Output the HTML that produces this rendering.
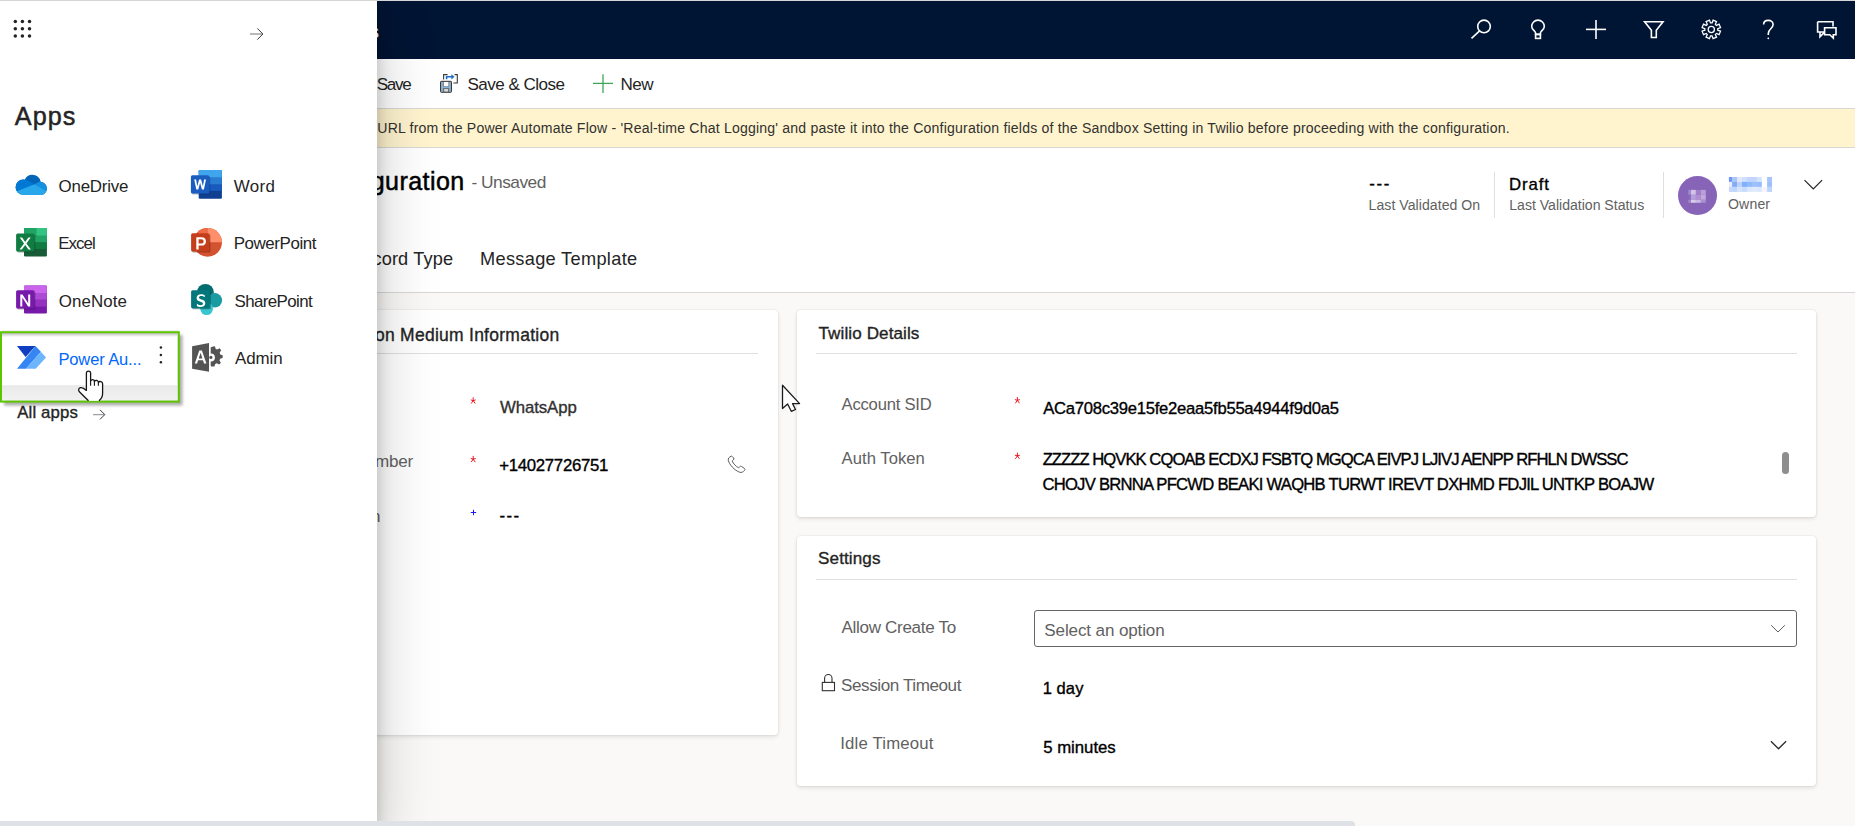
<!DOCTYPE html>
<html><head><meta charset="utf-8">
<style>
html,body{margin:0;padding:0;}
body{width:1855px;height:826px;overflow:hidden;position:relative;background:#faf9f8;font-family:"Liberation Sans",sans-serif;}
.t{position:absolute;white-space:nowrap;}
.abs{position:absolute;}
#main{position:absolute;left:0;top:0;width:1855px;height:826px;overflow:hidden;}
#nav{position:absolute;left:0;top:1px;width:1855px;height:58px;background:#001433;}
#cmd{position:absolute;left:0;top:59px;width:1855px;height:49px;background:#fff;border-bottom:1px solid #d8d8d8;}
#notif{position:absolute;left:0;top:109px;width:1855px;height:38px;background:#fff4ce;border-bottom:1px solid #d8d8d8;}
#hdr{position:absolute;left:0;top:148px;width:1855px;height:144px;background:#fff;border-bottom:1px solid #d8d8d8;}
.card{position:absolute;background:#fff;border-radius:4px;box-shadow:0 0 2px rgba(0,0,0,0.12),0 2px 4px rgba(0,0,0,0.10);}
.sep{position:absolute;height:1px;background:#e1dfdd;}
#panel{position:absolute;left:0;top:0;width:377px;height:826px;background:#fff;box-shadow:0 25.6px 57.6px 0 rgba(0,0,0,.22),0 4.8px 14.4px 0 rgba(0,0,0,.18);z-index:10;}
#topline{position:absolute;left:0;top:0;width:1855px;height:1px;background:#d6d6d6;z-index:20;}
#hscroll{position:absolute;left:0;top:821px;width:1355px;height:6px;background:#dee1e5;border-radius:0 4px 0 0;z-index:15;}
</style></head><body>
<div id="main">
  <div id="nav"></div>
  <div id="cmd"></div>
  <div id="notif"></div>
  <div id="hdr"></div>

  <!-- header dividers -->
  <div class="abs" style="left:1494px;top:172px;width:1px;height:46px;background:#e1dfdd;"></div>
  <div class="abs" style="left:1663px;top:172px;width:1px;height:46px;background:#e1dfdd;"></div>
  <!-- avatar -->
  <div class="abs" style="left:1678px;top:176px;width:39px;height:39px;border-radius:50%;background:#8764b8;"></div>

  <!-- cards -->
  <div class="card" style="left:300px;top:310px;width:478px;height:425px;"></div>
  <div class="sep" style="left:300px;top:353px;width:458px;"></div>
  <div class="card" style="left:797px;top:310px;width:1019px;height:207px;"></div>
  <div class="sep" style="left:816px;top:353px;width:981px;"></div>
  <div class="card" style="left:797px;top:536px;width:1019px;height:250px;"></div>
  <div class="sep" style="left:816px;top:579px;width:981px;"></div>
  <!-- select box -->
  <div class="abs" style="left:1034px;top:610px;width:761px;height:35px;border:1px solid #666;border-radius:3px;background:#fff;"></div>
  <!-- textarea scrollbar thumb -->
  <div class="abs" style="left:1782px;top:452px;width:7px;height:22px;border-radius:4px;background:#8e8e8e;"></div>

<div class="t" style="top:75.55px;font-size:17.07px;line-height:17.07px;color:#242424;letter-spacing:-1.258px;left:376.67px;">Save</div>
<div class="t" style="top:75.55px;font-size:17.07px;line-height:17.07px;color:#242424;letter-spacing:-0.543px;left:467.47px;">Save &amp; Close</div>
<div class="t" style="top:76.35px;font-size:17.07px;line-height:17.07px;color:#242424;letter-spacing:-0.458px;left:620.47px;">New</div>
<div class="t" style="top:120.78px;font-size:14.08px;line-height:14.08px;color:#323130;letter-spacing:0.187px;left:377.32px;">URL from the Power Automate Flow - 'Real-time Chat Logging' and paste it into the Configuration fields of the Sandbox Setting in Twilio before proceeding with the configuration.</div>
<div class="t" style="top:168.61px;font-size:25.03px;line-height:25.03px;color:#000;-webkit-text-stroke:0.5px #000;letter-spacing:0.447px;left:370.72px;">guration</div>
<div class="t" style="top:174.11px;font-size:17.35px;line-height:17.35px;color:#616161;letter-spacing:-0.520px;left:471.46px;">- Unsaved</div>
<div class="t" style="top:197.98px;font-size:14.08px;line-height:14.08px;color:#616161;letter-spacing:0.044px;left:1368.60px;">Last Validated On</div>
<div class="t" style="top:176.69px;font-size:16.78px;line-height:16.78px;color:#000;-webkit-text-stroke:0.35px #000;letter-spacing:0.847px;left:1509.09px;">Draft</div>
<div class="t" style="top:197.98px;font-size:14.08px;line-height:14.08px;color:#616161;letter-spacing:-0.010px;left:1509.30px;">Last Validation Status</div>
<div class="t" style="top:196.98px;font-size:14.08px;line-height:14.08px;color:#616161;letter-spacing:0.140px;left:1728.04px;">Owner</div>
<div class="t" style="top:250.49px;font-size:18.20px;line-height:18.20px;color:#242424;letter-spacing:0.134px;left:372.43px;">cord Type</div>
<div class="t" style="top:250.49px;font-size:18.20px;line-height:18.20px;color:#242424;letter-spacing:0.325px;left:479.98px;">Message Template</div>
<div class="t" style="top:326.99px;font-size:17.49px;line-height:17.49px;color:#242424;-webkit-text-stroke:0.35px #242424;letter-spacing:0.271px;left:374.95px;">on Medium Information</div>
<div class="t" style="top:453.15px;font-size:17.07px;line-height:17.07px;color:#616161;letter-spacing:-0.211px;left:374.93px;">mber</div>
<div class="t" style="top:507.55px;font-size:17.07px;line-height:17.07px;color:#616161;left:370.93px;">n</div>
<div class="t" style="top:399.99px;font-size:16.78px;line-height:16.78px;color:#323130;-webkit-text-stroke:0.35px #323130;letter-spacing:-0.063px;left:499.90px;">WhatsApp</div>
<div class="t" style="top:458.09px;font-size:16.78px;line-height:16.78px;color:#000;-webkit-text-stroke:0.35px #000;letter-spacing:-0.291px;left:499.21px;">+14027726751</div>
<div class="t" style="top:324.55px;font-size:17.07px;line-height:17.07px;color:#242424;-webkit-text-stroke:0.35px #242424;letter-spacing:0.101px;left:818.53px;">Twilio Details</div>
<div class="t" style="top:396.91px;font-size:16.64px;line-height:16.64px;color:#616161;letter-spacing:-0.231px;left:841.60px;">Account SID</div>
<div class="t" style="top:400.91px;font-size:16.64px;line-height:16.64px;color:#000;-webkit-text-stroke:0.35px #000;letter-spacing:-0.256px;left:1043.20px;">ACa708c39e15fe2eaa5fb55a4944f9d0a5</div>
<div class="t" style="top:450.51px;font-size:16.64px;line-height:16.64px;color:#616161;letter-spacing:0.042px;left:841.60px;">Auth Token</div>
<div class="t" style="top:451.51px;font-size:16.64px;line-height:16.64px;color:#000;-webkit-text-stroke:0.35px #000;letter-spacing:-0.960px;left:1042.68px;">ZZZZZ HQVKK CQOAB ECDXJ FSBTQ MGQCA EIVPJ LJIVJ AENPP RFHLN DWSSC</div>
<div class="t" style="top:476.51px;font-size:16.64px;line-height:16.64px;color:#000;-webkit-text-stroke:0.35px #000;letter-spacing:-0.747px;left:1042.42px;">CHOJV BRNNA PFCWD BEAKI WAQHB TURWT IREVT DXHMD FDJIL UNTKP BOAJW</div>
<div class="t" style="top:550.25px;font-size:17.07px;line-height:17.07px;color:#242424;-webkit-text-stroke:0.35px #242424;letter-spacing:0.100px;left:818.07px;">Settings</div>
<div class="t" style="top:619.35px;font-size:17.07px;line-height:17.07px;color:#616161;letter-spacing:-0.323px;left:841.50px;">Allow Create To</div>
<div class="t" style="top:621.65px;font-size:17.07px;line-height:17.07px;color:#616161;letter-spacing:-0.134px;left:1044.37px;">Select an option</div>
<div class="t" style="top:676.55px;font-size:17.07px;line-height:17.07px;color:#616161;letter-spacing:-0.414px;left:841.07px;">Session Timeout</div>
<div class="t" style="top:679.63px;font-size:16.50px;line-height:16.50px;color:#000;-webkit-text-stroke:0.35px #000;letter-spacing:0.093px;left:1042.67px;">1 day</div>
<div class="t" style="top:735.59px;font-size:16.78px;line-height:16.78px;color:#616161;letter-spacing:0.167px;left:840.29px;">Idle Timeout</div>
<div class="t" style="top:739.79px;font-size:16.78px;line-height:16.78px;color:#000;-webkit-text-stroke:0.35px #000;letter-spacing:-0.014px;left:1043.18px;">5 minutes</div>
<div class="t" style="top:507.79px;font-size:16.78px;line-height:16.78px;color:#000;-webkit-text-stroke:0.35px #000;letter-spacing:1.382px;left:499.48px;">---</div>
<div class="t" style="top:175.79px;font-size:16.78px;line-height:16.78px;color:#000;-webkit-text-stroke:0.35px #000;letter-spacing:1.732px;left:1369.18px;">---</div>

<svg class="abs" style="left:0;top:0;z-index:2" width="1855" height="826" viewBox="0 0 1855 826">
  <!-- nav partial s -->
  <text x="370" y="37.5" font-family="Liberation Sans" font-size="18" fill="#fff">s</text>
  <!-- nav icons -->
  <g fill="none" stroke="#fff" stroke-width="1.6">
    <circle cx="1484" cy="26.4" r="6.3"/>
    <line x1="1471.5" y1="38.3" x2="1479.6" y2="30.8"/>
    <path d="M1535.6,34.4 L1535.6,33 C1535.6,31.2 1531.7,29.6 1531.7,26.4 A6.3,6.3 0 0 1 1544.3,26.4 C1544.3,29.6 1540.4,31.2 1540.4,33 L1540.4,34.4 Z"/>
    <rect x="1535.6" y="34.4" width="4.8" height="4"/>
    <line x1="1586" y1="29.4" x2="1606" y2="29.4"/>
    <line x1="1596" y1="19.9" x2="1596" y2="38.9"/>
    <path d="M1644.6,21.7 L1663,21.7 L1656.3,30.2 L1656.3,37.5 L1651.4,37.5 L1651.4,30.2 Z"/>
    <g stroke-width="1.25"><path d="M1712.09,22.95 L1713.09,20.17 L1716.56,21.61 L1715.30,24.28 L1716.42,25.40 L1719.09,24.14 L1720.53,27.61 L1717.75,28.61 L1717.75,30.19 L1720.53,31.19 L1719.09,34.66 L1716.42,33.40 L1715.30,34.52 L1716.56,37.19 L1713.09,38.63 L1712.09,35.85 L1710.51,35.85 L1709.51,38.63 L1706.04,37.19 L1707.30,34.52 L1706.18,33.40 L1703.51,34.66 L1702.07,31.19 L1704.85,30.19 L1704.85,28.61 L1702.07,27.61 L1703.51,24.14 L1706.18,25.40 L1707.30,24.28 L1706.04,21.61 L1709.51,20.17 L1710.51,22.95 Z"/>
    <circle cx="1711.3" cy="29.4" r="3.1"/></g>
    <path d="M1763.6,24.6 C1763.6,21.6 1765.8,20.4 1768.3,20.4 C1771.1,20.4 1773.1,22.2 1773.1,24.6 C1773.1,28.6 1768.3,29 1768.3,33.4 L1768.3,35"/>
    <path d="M1817.6,21.8 L1833,21.8 L1833,26.6 M1824.6,32 L1817.6,32 L1817.6,21.8 M1820,32 L1820,36.8 L1824,32.6"/>
    <path d="M1824.6,27.8 L1836,27.8 L1836,34.8 L1833.3,34.8 L1833.3,38.2 L1829.8,34.8 L1824.6,34.8 Z"/>
  </g>
  <circle cx="1768.3" cy="38.3" r="0.9" fill="#fff"/>

  <!-- Save & Close icon -->
  <g>
    <rect x="440.5" y="81.3" width="11" height="11" rx="0.8" fill="#707070" stroke="#3b3a39" stroke-width="1"/>
    <rect x="441.2" y="82" width="1.6" height="9.8" fill="#8ab8e0"/>
    <rect x="449.2" y="82" width="1.6" height="9.8" fill="#8ab8e0"/>
    <rect x="441.2" y="86.6" width="9.6" height="1.3" fill="#8ab8e0"/>
    <rect x="443.8" y="82" width="4.6" height="4.2" fill="#fff"/>
    <rect x="444.2" y="89" width="3.8" height="2.6" fill="#d8d8d8"/>
    <path d="M443.6,79.5 L443.6,74.6 L447.6,74.6 M454.6,74.6 L457.3,74.6 L457.3,83 L453.4,83" fill="none" stroke="#3b3a39" stroke-width="1.1"/>
    <path d="M446.6,79.2 L446.6,76.8 L452.2,76.8" fill="none" stroke="#1f6fc5" stroke-width="1.6"/>
    <path d="M451.4,74.2 L454.6,76.8 L451.4,79.4 Z" fill="#1f6fc5"/>
  </g>
  <!-- New plus -->
  <g stroke="#3ea55a" stroke-width="1.3">
    <line x1="593" y1="83.4" x2="613" y2="83.4"/>
    <line x1="603" y1="74.2" x2="603" y2="93"/>
  </g>

  <!-- header chevron -->
  <path d="M1804.5,180.2 L1813.3,189 L1822.1,180.2" fill="none" stroke="#242424" stroke-width="1.2"/>

  <!-- avatar initials pixelated -->
  <g>
    <rect x="1688.2" y="189.9" width="2.7" height="4.9" fill="#9b8ad0"/><rect x="1690.9" y="189.9" width="5" height="4.9" fill="#d5c3e6"/><rect x="1695.9" y="189.9" width="5" height="4.9" fill="#9e80cc"/><rect x="1700.9" y="189.9" width="4.9" height="4.9" fill="#bb9fd8"/>
    <rect x="1688.2" y="194.8" width="2.7" height="5" fill="#8a68bb"/><rect x="1690.9" y="194.8" width="5" height="5" fill="#b5a0dc"/><rect x="1695.9" y="194.8" width="5" height="5" fill="#b18ed0"/><rect x="1700.9" y="194.8" width="4.9" height="5" fill="#c2a8dc"/>
    <rect x="1688.2" y="199.8" width="2.7" height="3" fill="#9c86cc"/><rect x="1690.9" y="199.8" width="5" height="3" fill="#d8cce9"/><rect x="1695.9" y="199.8" width="5" height="3" fill="#c7b9e4"/><rect x="1700.9" y="199.8" width="4.9" height="3" fill="#ab8fd0"/>
  </g>
  <!-- pixelated name -->
  <g>
<rect x="1728.9" y="177" width="3.25" height="4.95" fill="#6f95f8"/>
<rect x="1732.1" y="177" width="5.05" height="4.95" fill="#a7c6fb"/>
<rect x="1737.1" y="177" width="4.95" height="4.95" fill="#e4e6fc"/>
<rect x="1742" y="177" width="5.05" height="4.95" fill="#cde0fd"/>
<rect x="1747" y="177" width="5.05" height="4.95" fill="#c4d4fd"/>
<rect x="1752" y="177" width="4.95" height="4.95" fill="#c5d3fd"/>
<rect x="1756.9" y="177" width="5.05" height="4.95" fill="#d4e4fd"/>
<rect x="1761.9" y="177" width="5.25" height="4.95" fill="#ffffff"/>
<rect x="1767.1" y="177" width="4.95" height="4.95" fill="#a7c4fa"/>
<rect x="1728.9" y="181.9" width="3.25" height="5.05" fill="#ececfd"/>
<rect x="1732.1" y="181.9" width="5.05" height="5.05" fill="#84aaf8"/>
<rect x="1737.1" y="181.9" width="4.95" height="5.05" fill="#bcd2fc"/>
<rect x="1742" y="181.9" width="5.05" height="5.05" fill="#83b0fa"/>
<rect x="1747" y="181.9" width="5.05" height="5.05" fill="#8ebcfb"/>
<rect x="1752" y="181.9" width="4.95" height="5.05" fill="#9dbffb"/>
<rect x="1756.9" y="181.9" width="5.05" height="5.05" fill="#9bbcfb"/>
<rect x="1761.9" y="181.9" width="5.25" height="5.05" fill="#ffffff"/>
<rect x="1767.1" y="181.9" width="4.95" height="5.05" fill="#a0c0fa"/>
<rect x="1728.9" y="186.9" width="3.25" height="5.05" fill="#ccd6fb"/>
<rect x="1732.1" y="186.9" width="5.05" height="5.05" fill="#bcd6fc"/>
<rect x="1737.1" y="186.9" width="4.95" height="5.05" fill="#d7e2fc"/>
<rect x="1742" y="186.9" width="5.05" height="5.05" fill="#c8dcfc"/>
<rect x="1747" y="186.9" width="5.05" height="5.05" fill="#dce9fd"/>
<rect x="1752" y="186.9" width="4.95" height="5.05" fill="#e2ebfd"/>
<rect x="1756.9" y="186.9" width="5.05" height="5.05" fill="#dce8fd"/>
<rect x="1761.9" y="186.9" width="5.25" height="5.05" fill="#f7f4fe"/>
<rect x="1767.1" y="186.9" width="4.95" height="5.05" fill="#bad6fc"/>
  </g>

  <!-- asterisks / required markers -->
  <g fill="none" stroke="#e8101e" stroke-width="0.95" stroke-linecap="round">
<path d="M473.2,400.6 L473.2,397.70000000000005 M473.2,400.6 L471.09999999999997,400.0 M473.2,400.6 L475.3,400.0 M473.2,400.6 L471.4,403.20000000000005 M473.2,400.6 L475.0,403.20000000000005"/>
<path d="M473.2,459.2 L473.2,456.3 M473.2,459.2 L471.09999999999997,458.59999999999997 M473.2,459.2 L475.3,458.59999999999997 M473.2,459.2 L471.4,461.8 M473.2,459.2 L475.0,461.8"/>
<path d="M1017.4,400.3 L1017.4,397.40000000000003 M1017.4,400.3 L1015.3,399.7 M1017.4,400.3 L1019.5,399.7 M1017.4,400.3 L1015.6,402.90000000000003 M1017.4,400.3 L1019.1999999999999,402.90000000000003"/>
<path d="M1017.4,455.9 L1017.4,453.0 M1017.4,455.9 L1015.3,455.29999999999995 M1017.4,455.9 L1019.5,455.29999999999995 M1017.4,455.9 L1015.6,458.5 M1017.4,455.9 L1019.1999999999999,458.5"/>
  </g>
  <g stroke="#1c1cf0" stroke-width="1">
    <line x1="470.8" y1="512.5" x2="476.2" y2="512.5"/>
    <line x1="473.5" y1="509.8" x2="473.5" y2="515.2"/>
  </g>
  <!-- phone icon -->
  <path d="M731.2,456.2 C729.4,457 727.8,458.3 728.3,460.4 C729.3,464.6 734.5,470.3 739.5,472.2 C741.4,472.9 743.4,472 744.6,470.3 C745.1,469.6 745,468.8 744.3,468.3 L741.6,466.5 C740.9,466 740.1,466.1 739.6,466.7 L738.6,467.8 C735.8,466.4 733.4,463.8 732.2,461 L733.4,460 C734,459.5 734.1,458.7 733.7,458 L732.4,456.6 C732.1,456.2 731.7,456 731.2,456.2 Z" fill="none" stroke="#605e5c" stroke-width="1"/>

  <!-- select chevron -->
  <path d="M1771.2,625.3 L1778,632 L1784.8,625.3" fill="none" stroke="#605e5c" stroke-width="1"/>
  <!-- idle chevron -->
  <path d="M1770.9,741.2 L1778.5,748.7 L1786.1,741.2" fill="none" stroke="#323130" stroke-width="1.4"/>
  <!-- lock -->
  <g fill="none" stroke="#323130" stroke-width="1.1">
    <path d="M824.6,682.4 L824.6,678.2 A3.7,3.7 0 0 1 832,678.2 L832,682.4"/>
    <rect x="822.3" y="682.4" width="12.2" height="8.3"/>
  </g>
</svg>
<svg class="abs" style="left:0;top:0;z-index:30;pointer-events:none" width="1855" height="826" viewBox="0 0 1855 826">
  <path d="M782.5,385.3 L782.5,408.6 L787.6,404 L791.3,411.3 L795.5,409.5 L792.6,403.6 L799.6,403.6 Z" fill="#fff" stroke="#1b1b1b" stroke-width="1.3" stroke-linejoin="round"/>
</svg>

</div>

<div id="panel">

<svg class="abs" style="left:0;top:0" width="377" height="826" viewBox="0 0 377 826">
  <!-- waffle -->
  <g fill="#242424">
    <circle cx="15.3" cy="21.6" r="1.75"/><circle cx="22.4" cy="21.6" r="1.75"/><circle cx="29.5" cy="21.6" r="1.75"/>
    <circle cx="15.3" cy="28.8" r="1.75"/><circle cx="22.4" cy="28.8" r="1.75"/><circle cx="29.5" cy="28.8" r="1.75"/>
    <circle cx="15.3" cy="36" r="1.75"/><circle cx="22.4" cy="36" r="1.75"/><circle cx="29.5" cy="36" r="1.75"/>
  </g>
  <!-- top arrow -->
  <line x1="250" y1="34" x2="262" y2="34" stroke="#9ea2a8" stroke-width="1.5"/>
  <path d="M257.3,28.4 L262.9,34 L257.3,39.6" fill="none" stroke="#3b3a39" stroke-width="1"/>

  <!-- OneDrive -->
  <defs>
    <clipPath id="odclip">
      <circle cx="32.4" cy="183.3" r="8.5"/>
      <circle cx="23.2" cy="187.2" r="7.6"/>
      <circle cx="40.4" cy="188.5" r="6.5"/>
      <rect x="23" y="187" width="18" height="8"/>
    </clipPath>
  </defs>
  <g clip-path="url(#odclip)">
    <rect x="10" y="170" width="45" height="30" fill="#0364b8"/>
    <polygon points="5,168 22.5,177.5 34.5,184.3 5,200" fill="#0078d4"/>
    <polygon points="34.5,184.3 40.5,181 55,181 55,200" fill="#1490df"/>
    <polygon points="5,196 34.5,184.3 55,196.5 55,200 5,200" fill="#28a8ea"/>
  </g>

  <!-- Word -->
  <g>
    <rect x="198.7" y="170.1" width="23.2" height="28.6" rx="1.2" fill="#103f91"/>
    <path d="M198.7,171.3 a1.2,1.2 0 0 1 1.2,-1.2 h20.8 a1.2,1.2 0 0 1 1.2,1.2 v6.4 h-23.2 Z" fill="#41a5ee"/>
    <rect x="198.7" y="177.7" width="23.2" height="7" fill="#2b7cd3"/>
    <rect x="198.7" y="184.7" width="23.2" height="6.2" fill="#185abd"/>
    <rect x="191.9" y="176.2" width="18.4" height="18.4" rx="1.5" fill="#0b2e6b" opacity="0.35"/>
    <rect x="190.9" y="175.2" width="18.4" height="18.4" rx="1.5" fill="#1a5dbf"/>
    <path d="M194.2,179.4 L196.3,189.4 L198.3,189.4 L200.1,182.7 L201.9,189.4 L203.9,189.4 L206,179.4 L204.1,179.4 L202.9,186.2 L201.1,179.4 L199.1,179.4 L197.3,186.2 L196.1,179.4 Z" fill="#fff"/>
  </g>

  <!-- Excel -->
  <g>
    <rect x="24" y="228.1" width="22.9" height="28.4" rx="1.2" fill="#185c37"/>
    <path d="M24,229.3 a1.2,1.2 0 0 1 1.2,-1.2 h20.5 a1.2,1.2 0 0 1 1.2,1.2 v6.5 h-22.9 Z" fill="#21a366"/>
    <path d="M36.5,228.1 h9.2 a1.2,1.2 0 0 1 1.2,1.2 v6.5 h-10.4 Z" fill="#33c481"/>
    <rect x="24" y="235.8" width="22.9" height="6.7" fill="#21a366"/>
    <rect x="24" y="242.5" width="22.9" height="6.5" fill="#107c41"/>
    <rect x="17.1" y="234.4" width="18.3" height="18.1" rx="1.5" fill="#0a3d1f" opacity="0.45"/>
    <rect x="16.1" y="233.4" width="18.3" height="18.1" rx="1.5" fill="#107c41"/>
    <path d="M19.7,237.4 L22.1,237.4 L25.2,242 L28.3,237.4 L30.7,237.4 L26.4,243.6 L30.9,249.6 L28.5,249.6 L25.2,245 L21.9,249.6 L19.5,249.6 L24,243.6 Z" fill="#fff"/>
  </g>

  <!-- OneNote -->
  <g>
    <rect x="24" y="285.4" width="22.9" height="28.1" rx="1.2" fill="#7719aa"/>
    <path d="M24,286.6 a1.2,1.2 0 0 1 1.2,-1.2 h20.5 a1.2,1.2 0 0 1 1.2,1.2 v6.4 h-22.9 Z" fill="#ca64ea"/>
    <rect x="24" y="293" width="22.9" height="6.8" fill="#ae4bd5"/>
    <rect x="24" y="299.8" width="22.9" height="6.8" fill="#9332bf"/>
    <rect x="17.1" y="291.2" width="18.3" height="18.3" rx="1.5" fill="#3a0a55" opacity="0.4"/>
    <rect x="16.1" y="290.2" width="18.3" height="18.3" rx="1.5" fill="#7719aa"/>
    <path d="M20.3,294.5 L22.5,294.5 L28.2,303.3 L28.2,294.5 L30.2,294.5 L30.2,306.5 L28.1,306.5 L22.3,297.6 L22.3,306.5 L20.3,306.5 Z" fill="#fff"/>
  </g>

  <!-- PowerPoint -->
  <g>
    <circle cx="207.6" cy="242.3" r="14.35" fill="#d35230"/>
    <path d="M207.6,242.3 L207.6,227.95 A14.35,14.35 0 0 0 193.25,242.3 Z" fill="#ed6c47"/>
    <path d="M207.6,242.3 L207.6,227.95 A14.35,14.35 0 0 1 221.95,242.3 Z" fill="#ff8f6b"/>
    <rect x="192.1" y="234.2" width="18.3" height="18.3" rx="1.5" fill="#5c1a0a" opacity="0.45"/>
    <rect x="191.1" y="233.2" width="18.3" height="18.3" rx="1.5" fill="#c43e1c"/>
    <path d="M196.3,237.3 L201.6,237.3 C204.4,237.3 206,238.9 206,241.4 C206,244 204.2,245.6 201.5,245.6 L198.6,245.6 L198.6,249.5 L196.3,249.5 Z M198.6,239.3 L198.6,243.6 L201.1,243.6 C202.8,243.6 203.6,242.8 203.6,241.4 C203.6,240 202.8,239.3 201.1,239.3 Z" fill="#fff"/>
  </g>

  <!-- SharePoint -->
  <g>
    <circle cx="205.4" cy="292.3" r="8.4" fill="#036c70"/>
    <circle cx="214.8" cy="300.3" r="7.3" fill="#1a9ba1"/>
    <circle cx="206.6" cy="308.6" r="6.4" fill="#37c6d0"/>
    <rect x="192.1" y="291.2" width="18.7" height="18.1" rx="1.5" fill="#02393b" opacity="0.45"/>
    <rect x="191.1" y="290.2" width="18.7" height="18.1" rx="1.5" fill="#03787c"/>
    <path d="M204.8,295.3 C203.9,294.6 202.6,294.2 201.1,294.2 C198.3,294.2 196.6,295.8 196.6,297.9 C196.6,302.3 203,301 203,303.6 C203,304.6 202.1,305.2 200.7,305.2 C199.2,305.2 197.8,304.5 196.9,303.6 L196.9,306 C197.8,306.6 199.1,307 200.6,307 C203.5,307 205.3,305.6 205.3,303.3 C205.3,298.9 198.9,300.1 198.9,297.6 C198.9,296.7 199.7,296 201.2,296 C202.6,296 203.8,296.5 204.8,297.3 Z" fill="#fff"/>
  </g>

  <!-- green highlight + tile -->
  <rect x="2" y="330" width="176" height="1" fill="#ececec"/>
  <rect x="4" y="335" width="178.5" height="70.5" fill="#000" opacity="0.32" filter="url(#blur3)"/>
  <defs><filter id="blur3" x="-10%" y="-20%" width="120%" height="140%"><feGaussianBlur stdDeviation="1.4"/></filter>
  <linearGradient id="band" x1="0" y1="0" x2="0" y2="1"><stop offset="0" stop-color="#e9e9e9"/><stop offset="1" stop-color="#f2f2f2"/></linearGradient>
  <linearGradient id="topsh" x1="0" y1="0" x2="0" y2="1"><stop offset="0" stop-color="#bdbdbd"/><stop offset="1" stop-color="#ffffff"/></linearGradient></defs>
  <rect x="2" y="333" width="175.8" height="67.6" fill="#fff"/>
  <rect x="2" y="333" width="175.8" height="4" fill="url(#topsh)"/>
  <rect x="2" y="385.2" width="175.8" height="15.4" fill="url(#band)"/>
  <rect x="1" y="332.2" width="177.8" height="69.4" fill="none" stroke="#5cc500" stroke-width="2"/>

  <!-- Power Automate -->
  <g>
    <polygon points="17,346.1 35.5,346.1 25.6,357" fill="#0f3fc0"/>
    <polygon points="35.5,346.1 40.9,351.8 26,368.8 17,368.8" fill="#3585f2"/>
    <polygon points="40.9,351.8 46,357.4 35.7,368.8 26,368.8" fill="#6cb4fb"/>
  </g>
  <!-- three dots -->
  <g fill="#242424">
    <circle cx="160.9" cy="347.5" r="1.25"/><circle cx="160.9" cy="354.9" r="1.25"/><circle cx="160.9" cy="362.2" r="1.25"/>
  </g>

  <!-- Admin -->
  <g>
    <path d="M210.7,347.2 L213.2,346.4 L214.9,346.2 L215.6,348.7 L217.2,349.5 L219.6,348.3 L221.2,350.3 L219.7,352.6 L220.2,354.4 L222.7,355.3 L222.6,358 L220.1,358.8 L219.5,360.5 L220.9,362.7 L219.2,364.6 L216.9,363.3 L215.2,364 L214.4,366.5 L211.6,366.6 L210.7,366 Z" fill="#545454"/>
    <circle cx="210.9" cy="357.4" r="4" fill="#fff"/>
    <circle cx="210.9" cy="357.4" r="1.6" fill="#545454"/>
    <polygon points="192.1,346.2 209,343.1 209,371.7 192.1,368.8" fill="#545454"/>
    <path d="M199.3,350.6 L201.9,350.6 L206.4,363.4 L204,363.4 L203,360.3 L198.1,360.3 L197.1,363.4 L194.8,363.4 Z M198.7,358.4 L202.4,358.4 L200.6,352.8 Z" fill="#fff"/>
  </g>

  <!-- all apps arrow -->
  <line x1="93" y1="414.6" x2="104.6" y2="414.6" stroke="#9ea2a8" stroke-width="1.3"/>
  <path d="M100,409.8 L104.8,414.6 L100,419.4" fill="none" stroke="#3b3a39" stroke-width="1"/>

  <!-- hand cursor -->
  <path d="M88.5,400.8 L79.6,392 C78,390.4 78.4,388.2 80.6,387.6 C82.4,387.2 84.2,388.4 86.4,390.4 L86.4,373.2 C86.4,371.8 87.4,371.2 88.5,371.2 C89.6,371.2 90.6,371.8 90.6,373.2 L90.6,381 C91.8,379.2 94.2,379.2 94.4,381.4 C95.6,379.6 98.2,380.2 98.4,382.4 C99.6,380.8 102.6,381.4 102.6,383.8 L102.6,393.6 C102.6,396.6 101.2,399 99,400.8" fill="#fff" stroke="#161616" stroke-width="1.3" stroke-linejoin="round"/>
  <g stroke="#161616" stroke-width="1.1">
    <line x1="90.6" y1="380.8" x2="90.6" y2="385.8"/>
    <line x1="94.4" y1="381.4" x2="94.4" y2="385.8"/>
    <line x1="98.4" y1="382.4" x2="98.4" y2="385.8"/>
  </g>
</svg>
<div class="t" style="top:104.39px;font-size:25.17px;line-height:25.17px;color:#242424;-webkit-text-stroke:0.5px #242424;letter-spacing:1.103px;left:14.80px;">Apps</div>
<div class="t" style="top:179.47px;font-size:16.92px;line-height:16.92px;color:#242424;letter-spacing:-0.243px;left:58.61px;">OneDrive</div>
<div class="t" style="top:179.37px;font-size:16.92px;line-height:16.92px;color:#242424;letter-spacing:0.340px;left:233.80px;">Word</div>
<div class="t" style="top:235.67px;font-size:16.92px;line-height:16.92px;color:#242424;letter-spacing:-0.962px;left:58.28px;">Excel</div>
<div class="t" style="top:235.67px;font-size:16.92px;line-height:16.92px;color:#242424;letter-spacing:-0.398px;left:233.68px;">PowerPoint</div>
<div class="t" style="top:293.57px;font-size:16.92px;line-height:16.92px;color:#242424;letter-spacing:0.057px;left:58.81px;">OneNote</div>
<div class="t" style="top:293.57px;font-size:16.92px;line-height:16.92px;color:#242424;letter-spacing:-0.607px;left:234.47px;">SharePoint</div>
<div class="t" style="top:350.63px;font-size:16.50px;line-height:16.50px;color:#0066ff;letter-spacing:-0.120px;left:58.41px;">Power Au...</div>
<div class="t" style="top:351.27px;font-size:16.92px;line-height:16.92px;color:#242424;letter-spacing:-0.055px;left:235.00px;">Admin</div>
<div class="t" style="top:405.19px;font-size:16.78px;line-height:16.78px;color:#242424;-webkit-text-stroke:0.35px #242424;letter-spacing:0.160px;left:17.20px;">All apps</div>
</div>
<div id="topline"></div>
<div id="hscroll"></div>
</body></html>
